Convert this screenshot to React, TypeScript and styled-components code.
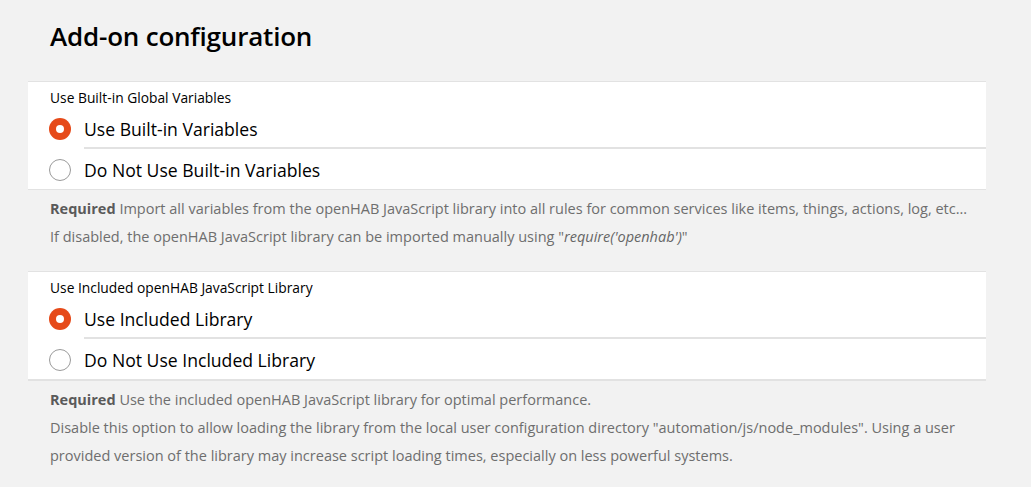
import React from "react";
import styled, { createGlobalStyle } from "styled-components";

const Global = createGlobalStyle`
  html, body { margin: 0; padding: 0; background: #f2f2f2; }
  body { font-family: "Open Sans", "Noto Sans", sans-serif; color: #000; }
`;

const Page = styled.div`
  padding: 0 45px 0 28px;
`;

const Title = styled.h1`
  margin: 0;
  padding: 18px 0 0 22px;
  height: 81px;
  box-sizing: border-box;
  font-size: 26px;
  line-height: 36px;
  font-weight: 600;
  letter-spacing: -0.2px;
`;

const Group = styled.div<{ $thick?: boolean }>`
  background: #fff;
  border-top: 1px solid #e2e2e2;
  border-bottom: ${(p) => (p.$thick ? 2 : 1)}px solid #e2e2e2;
`;

const GroupHeader = styled.div`
  padding: 7px 0 0 22px;
  height: 25px;
  box-sizing: border-box;
  font-size: 13.8px;
  line-height: 18px;
`;

const Item = styled.label`
  display: flex;
  align-items: center;
  height: 41px;
  padding: 2px 0 0 21px;
  box-sizing: border-box;
  cursor: pointer;
`;

const Inner = styled.div<{ $divider?: boolean }>`
  flex: 1;
  align-self: stretch;
  display: flex;
  align-items: center;
  margin-left: 13px;
  font-size: 17.6px;
  position: relative;
  ${(p) =>
    p.$divider
      ? `&::after { content: ""; position: absolute; left: 0; right: 0; bottom: -1px; height: 2px; background: #e2e2e2; }`
      : ""}
`;

const Radio = styled.span<{ $checked?: boolean }>`
  width: 22px;
  height: 22px;
  border-radius: 50%;
  box-sizing: border-box;
  flex: none;
  display: flex;
  align-items: center;
  justify-content: center;
  border: ${(p) => (p.$checked ? "none" : "1px solid #9a9a9a")};
  background: ${(p) => (p.$checked ? "#e64a19" : "#fff")};
  &::after {
    content: "";
    width: 8px;
    height: 8px;
    border-radius: 50%;
    background: #fff;
    display: ${(p) => (p.$checked ? "block" : "none")};
  }
`;

const Footer = styled.div`
  padding: 5px 0 0 22px;
  margin-bottom: 20px;
  font-size: 14.5px;
  line-height: 28px;
  color: #6e6e6e;
  p { margin: 0; }
  b { font-weight: 700; color: #5a5a5a; }
  i { color: #666; }
`;

type Opt = { label: string; checked?: boolean };

const Section: React.FC<{ title: string; options: Opt[]; thick?: boolean; children: React.ReactNode }> = ({
  title,
  options,
  thick,
  children,
}) => (
  <>
    <Group $thick={thick}>
      <GroupHeader>{title}</GroupHeader>
      {options.map((o, i) => (
        <Item key={o.label}>
          <Radio $checked={o.checked} />
          <Inner $divider={i < options.length - 1}>{o.label}</Inner>
        </Item>
      ))}
    </Group>
    <Footer>{children}</Footer>
  </>
);

export default function App() {
  return (
    <Page>
      <Global />
      <Title>Add-on configuration</Title>
      <Section
        title="Use Built-in Global Variables"
        options={[{ label: "Use Built-in Variables", checked: true }, { label: "Do Not Use Built-in Variables" }]}
      >
        <p>
          <b>Required</b> Import all variables from the openHAB JavaScript library into all rules for common services
          like items, things, actions, log, etc...
        </p>
        <p>
          If disabled, the openHAB JavaScript library can be imported manually using "<i>require('openhab')</i>"
        </p>
      </Section>
      <Section
        title="Use Included openHAB JavaScript Library"
        thick
        options={[{ label: "Use Included Library", checked: true }, { label: "Do Not Use Included Library" }]}
      >
        <p>
          <b>Required</b> Use the included openHAB JavaScript library for optimal performance.
        </p>
        <p>
          Disable this option to allow loading the library from the local user configuration directory
          "automation/js/node_modules". Using a user provided version of the library may increase script loading
          times, especially on less powerful systems.
        </p>
      </Section>
    </Page>
  );
}
